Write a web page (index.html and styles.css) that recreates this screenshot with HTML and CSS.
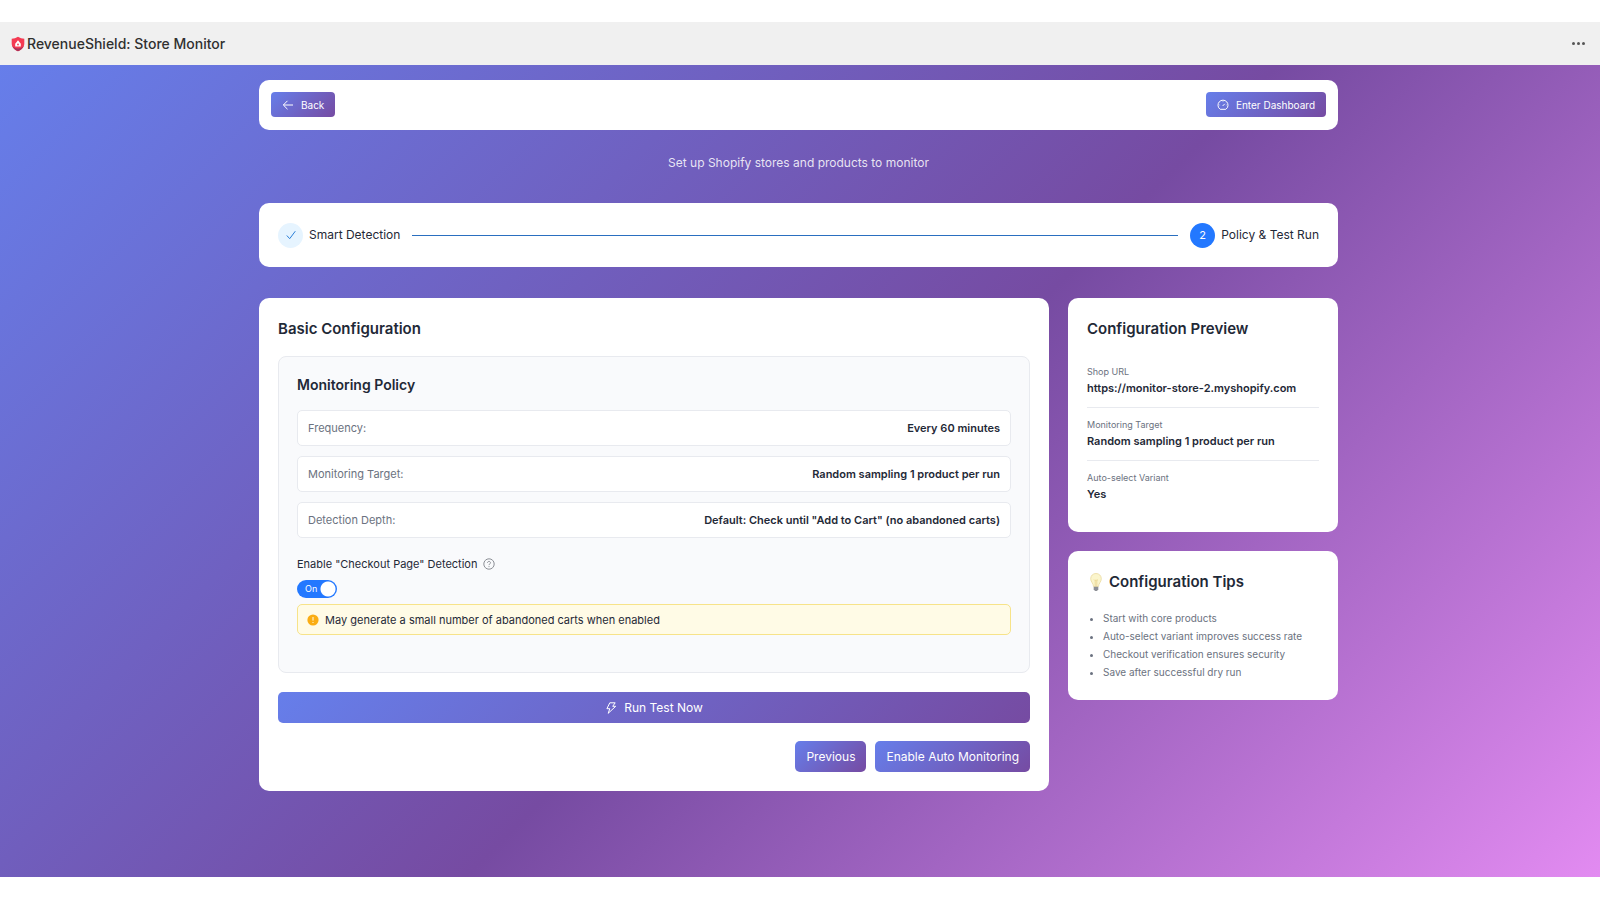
FILE: index.html
```
<!DOCTYPE html>
<html lang="en">
<head>
  <meta charset="UTF-8" />
  <meta name="viewport" content="width=device-width, initial-scale=1" />
  <title>RevenueShield: Store Monitor</title>
  <link rel="stylesheet" href="styles.css">
</head>
<body>

  <header class="app-header">
    <div class="brand">
      <svg class="brand-icon" viewBox="0 0 14 16">
        <path d="M7 .8c2 1.400 4 1.800 6.300 1.900v4.800c0 3.800-2.600 6.300-6.300 7.800-3.700-1.500-6.300-4-6.300-7.800V2.700C3 2.600 5 2.200 7 .8z" fill="#f43a52"/>
        <path d="M1.200 9.800c1 2.600 3.100 4.400 5.800 5.500 2.700-1.100 4.800-2.900 5.800-5.500-1.600 1.700-3.500 2.700-5.800 2.700s-4.200-1-5.800-2.700z" fill="#a8325a"/>
        <path d="M7 4.200L9.800 7.800v2.700H4.200V7.800z" fill="#fff"/>
        <circle cx="7" cy="8.500" r=".9" fill="#f43a52"/>
      </svg>
      <span>RevenueShield: Store Monitor</span>
    </div>
    <button class="more-btn" aria-label="More"><i></i><i></i><i></i></button>
  </header>

  <main class="page">
    <div class="container">

      <nav class="card top-bar">
        <button class="btn btn-small">
          <svg class="icon" viewBox="0 0 12 12"><path d="M11 6H1.500M5.500 1.800L1.300 6l4.200 4.200"/></svg>
          Back
        </button>
        <button class="btn btn-small">
          <svg class="icon" viewBox="0 0 12 12"><path d="M3.200 10.300a5 5 0 1 1 5.600 0zM5.600 7l2.200-2.200M6 2.500v.6M2.600 6h.5M8.900 6h.5"/></svg>
          Enter Dashboard
        </button>
      </nav>

      <p class="subtitle">Set up Shopify stores and products to monitor</p>

      <div class="card steps">
        <div class="step">
          <span class="step-dot done"><svg class="icon" viewBox="0 0 12 12"><path d="M1.800 6.500l2.900 3.200L10.300 2.200"/></svg></span>
          Smart Detection
        </div>
        <div class="step-line"></div>
        <div class="step">
          <span class="step-dot">2</span>
          Policy &amp; Test Run
        </div>
      </div>

      <div class="layout">
        <section class="card panel">
          <h2>Basic Configuration</h2>

          <div class="policy">
            <h3>Monitoring Policy</h3>
            <dl class="policy-list">
              <div class="policy-row"><dt>Frequency:</dt><dd>Every 60 minutes</dd></div>
              <div class="policy-row"><dt>Monitoring Target:</dt><dd>Random sampling 1 product per run</dd></div>
              <div class="policy-row"><dt>Detection Depth:</dt><dd>Default: Check until "Add to Cart" (no abandoned carts)</dd></div>
            </dl>

            <label class="switch-label" for="checkout">
              Enable "Checkout Page" Detection
              <svg class="help-icon" viewBox="0 0 12 12"><circle cx="6" cy="6" r="5.200"/><path d="M4.500 4.900c0-2 3-2 3 0 0 1-1.500 1-1.500 2.200M6 8.200v.9"/></svg>
            </label>
            <div class="switch">
              <input type="checkbox" id="checkout" checked />
              <span class="switch-text">On</span>
            </div>

            <div class="alert">
              <svg class="alert-icon" viewBox="0 0 12 12"><circle cx="6" cy="6" r="5.600" fill="#faad14"/><path d="M6 3v3.600M6 8v1" stroke="#fffbe6" stroke-width="1"/></svg>
              May generate a small number of abandoned carts when enabled
            </div>
          </div>

          <button class="btn btn-block">
            <svg class="icon" viewBox="0 0 12 12"><path d="M4.800 .8h5.400L7.700 4.300h3L3.200 11.300l1.600-4.600H1.900z"/></svg>
            Run Test Now
          </button>

          <div class="actions">
            <button class="btn">Previous</button>
            <button class="btn">Enable Auto Monitoring</button>
          </div>
        </section>

        <aside class="sidebar">
          <section class="card panel">
            <h2>Configuration Preview</h2>
            <dl class="preview">
              <div class="preview-item"><dt>Shop URL</dt><dd>https://monitor-store-2.myshopify.com</dd></div>
              <div class="preview-item"><dt>Monitoring Target</dt><dd>Random sampling 1 product per run</dd></div>
              <div class="preview-item"><dt>Auto-select Variant</dt><dd>Yes</dd></div>
            </dl>
          </section>

          <section class="card panel">
            <h2 class="tips-title">
              <svg class="bulb" viewBox="0 0 18 20">
                <path d="M9 1.500c3.200 0 5.300 2.300 5.300 5.200 0 3.300-2.600 4.400-2.900 8H6.600c-.3-3.600-2.900-4.700-2.900-8 0-2.900 2.100-5.200 5.300-5.200z" fill="#fbf5cc" stroke="#ead9a0" stroke-width=".8"/>
                <path d="M7 7.500l1.200 1.200.8-1 .8 1L11 7.500M8.200 8.700v5.800M9.800 8.700v5.800" fill="none" stroke="#e3c878" stroke-width=".6"/>
                <path d="M6.700 14.800h4.600v2.400l-1.300 1.800H8l-1.300-1.800z" fill="#8d9096"/>
              </svg>
              Configuration Tips
            </h2>
            <ul class="tips">
              <li>Start with core products</li>
              <li>Auto-select variant improves success rate</li>
              <li>Checkout verification ensures security</li>
              <li>Save after successful dry run</li>
            </ul>
          </section>
        </aside>
      </div>

    </div>
  </main>

</body>
</html>
```
FILE: styles.css
```
:root {
  --text: #1f2937;
  --muted: #6b7280;
  --border: #e8eaef;
  --blue: #2378ff;
  --btn-gradient: linear-gradient(135deg, #667eea 0%, #764ba2 100%);
}

* {
  box-sizing: border-box;
}

body {
  margin: 0;
  padding: 22px 0 24px;
  min-height: 100vh;
  display: flex;
  flex-direction: column;
  background: #fff;
  color: var(--text);
  font-family: Inter, "Liberation Sans", sans-serif;
  font-size: 11px;
  line-height: 16px;
}

h2, h3, p, dl, dd, ul {
  margin: 0;
  padding: 0;
}

.app-header {
  height: 43px;
  padding: 0 15px 0 11px;
  display: flex;
  align-items: center;
  justify-content: space-between;
  background: #f0f0f0;
  color: #303030;
  font-size: 14px;
  font-weight: 500;
}

.brand {
  display: flex;
  align-items: center;
  gap: 2px;
}

.brand-icon {
  width: 14px;
  height: 16px;
}

.more-btn {
  display: flex;
  gap: 2px;
  padding: 0;
  border: none;
  background: none;
}

.more-btn i {
  width: 3px;
  height: 3px;
  border-radius: 50%;
  background: #555;
}

.page {
  flex: 1;
  padding: 15px 3px 86px 0;
  background: linear-gradient(135deg, #667eea 0%, #764ba2 53%, #f093fb 106%);
}

.container {
  max-width: 1079px;
  margin: 0 auto;
}

.card {
  background: #fff;
  border-radius: 10px;
}

.top-bar {
  display: flex;
  justify-content: space-between;
  padding: 12px 12px 13px;
}

.btn {
  display: inline-flex;
  align-items: center;
  justify-content: center;
  gap: 7px;
  height: 31px;
  padding: 0 11px;
  border: none;
  border-radius: 5px;
  background: var(--btn-gradient);
  color: #fff;
  font-family: inherit;
  font-size: 12px;
  cursor: pointer;
}

.btn-small {
  height: 25px;
  font-size: 10px;
  border-radius: 4px;
}

.btn-block {
  width: 100%;
}

.icon {
  width: 12px;
  height: 12px;
  fill: none;
  stroke: currentColor;
  stroke-width: 1;
}

.subtitle {
  padding: 25px 0 32px;
  text-align: center;
  font-size: 12px;
  color: rgba(255, 255, 255, 0.85);
}

.steps {
  display: flex;
  align-items: center;
  gap: 12px;
  height: 64px;
  padding: 0 19px;
  font-size: 12px;
}

.step {
  display: flex;
  align-items: center;
  gap: 6px;
}

.step-dot {
  display: flex;
  align-items: center;
  justify-content: center;
  width: 25px;
  height: 25px;
  border-radius: 50%;
  background: var(--blue);
  color: #fff;
  font-size: 11px;
}

.step-dot.done {
  background: #e6f4ff;
  color: #2a7fd8;
}

.step-line {
  flex: 1;
  height: 1px;
  background: #2a6fc0;
}

.layout {
  display: grid;
  grid-template-columns: minmax(0, 1fr) 270px;
  align-items: start;
  gap: 19px;
  margin-top: 31px;
}

.panel {
  padding: 19px;
}

.panel h2 {
  font-size: 15px;
  line-height: 24px;
  font-weight: 600;
}

.policy {
  margin: 15px 0 19px;
  padding: 18px 18px 37px;
  border: 1px solid var(--border);
  border-radius: 8px;
  background: #f9fafc;
}

.policy h3 {
  font-size: 14px;
  line-height: 20px;
  font-weight: 600;
}

.policy-list {
  display: grid;
  gap: 10px;
  margin: 15px 0 18px;
}

.policy-row {
  display: flex;
  align-items: center;
  justify-content: space-between;
  height: 36px;
  padding: 0 10px;
  border: 1px solid var(--border);
  border-radius: 5px;
  background: #fff;
}

.policy-row dt {
  color: var(--muted);
}

.policy-row dd {
  font-weight: 600;
}

.switch-label {
  display: flex;
  align-items: center;
  gap: 6px;
}

.help-icon {
  width: 12px;
  height: 12px;
  fill: none;
  stroke: #8c8f96;
  stroke-width: 1;
}

.switch {
  position: relative;
  width: 40px;
  height: 18px;
  margin: 8px 0 6px;
}

.switch input {
  appearance: none;
  display: block;
  width: 100%;
  height: 100%;
  margin: 0;
  border-radius: 9px;
  background: radial-gradient(circle at 31px 9px, #fff 7px, var(--blue) 8px);
}

.switch-text {
  position: absolute;
  left: 8px;
  top: 1px;
  color: #fff;
  font-size: 9px;
  pointer-events: none;
}

.alert {
  display: flex;
  align-items: center;
  gap: 6px;
  height: 31px;
  padding: 0 9px;
  border: 1px solid #f7e389;
  border-radius: 5px;
  background: #fffbe6;
}

.alert-icon {
  width: 12px;
  height: 12px;
}

.actions {
  display: flex;
  justify-content: flex-end;
  gap: 9px;
  margin-top: 18px;
}

.sidebar {
  display: grid;
  gap: 19px;
}

.preview {
  margin-top: 14px;
}

.preview-item {
  padding: 9px 0 10px;
  border-bottom: 1px solid var(--border);
}

.preview-item:last-child {
  border-bottom: none;
}

.preview-item dt {
  color: var(--muted);
  font-size: 9px;
}

.preview-item dd {
  font-weight: 600;
  line-height: 17px;
}

.tips-title {
  display: flex;
  align-items: center;
  gap: 4px;
}

.bulb {
  width: 18px;
  height: 20px;
}

.tips {
  margin: 15px 0 0;
  padding-left: 16px;
  color: var(--muted);
  font-size: 10px;
  line-height: 18px;
}
```
